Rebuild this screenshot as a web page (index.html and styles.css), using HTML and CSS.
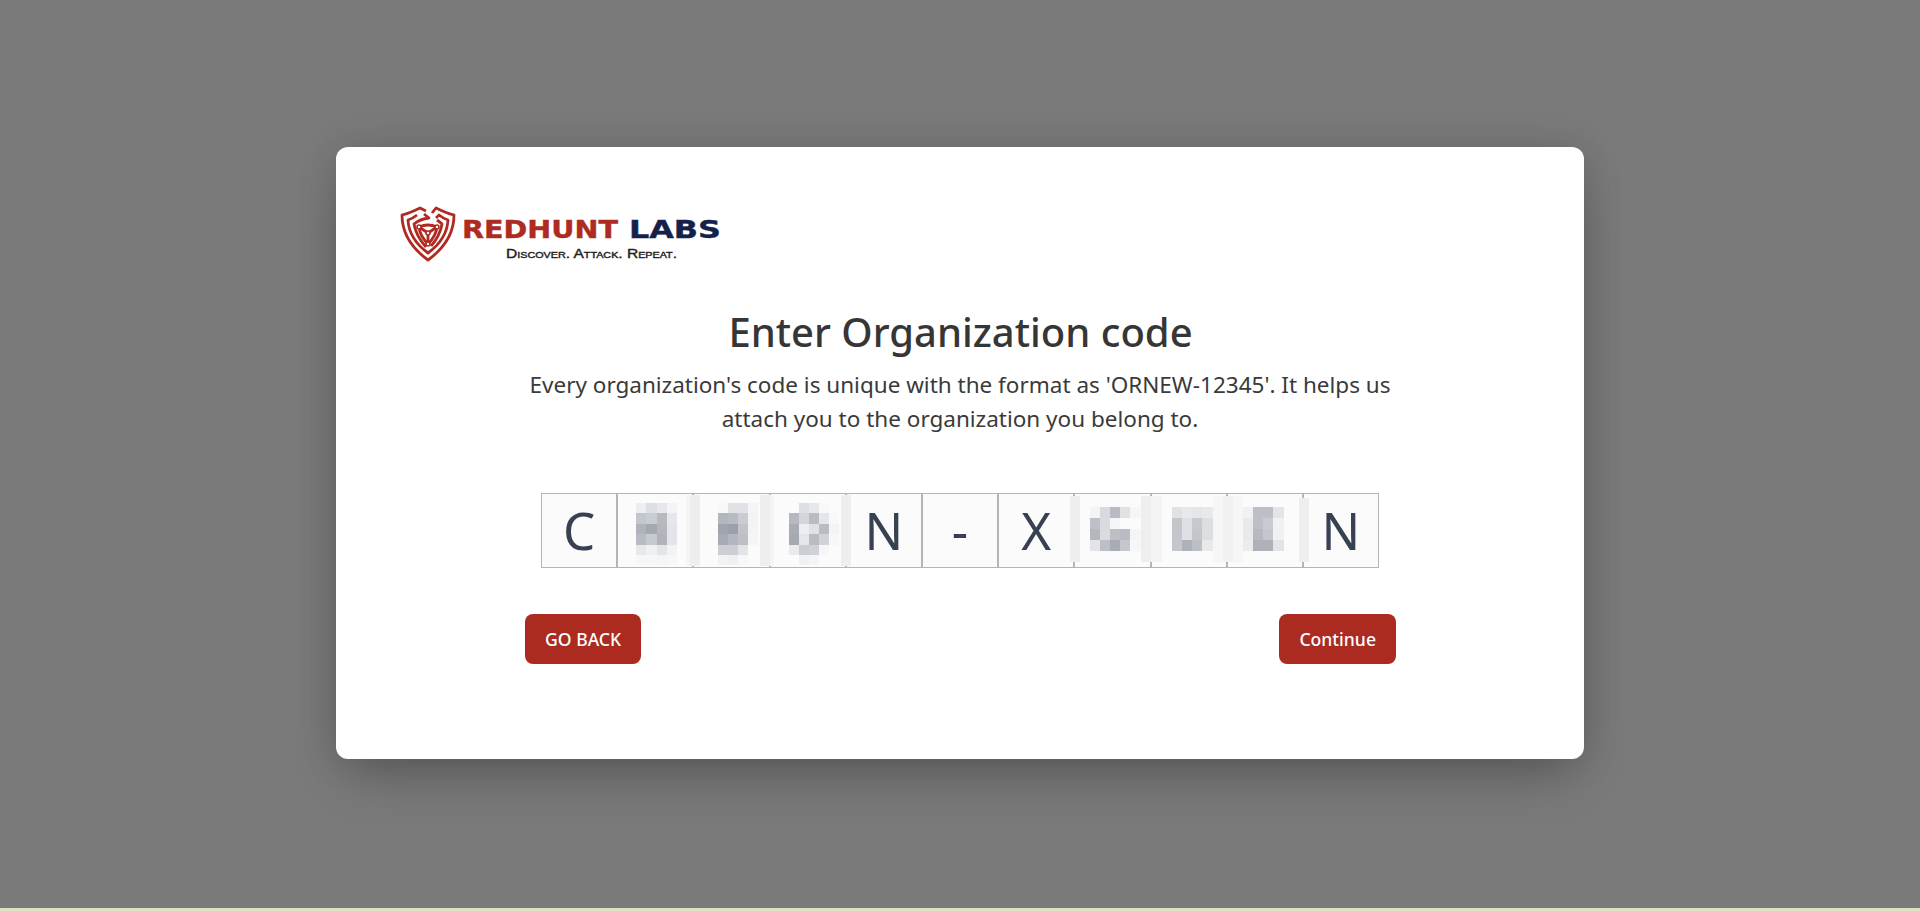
FILE: index.html
```html
<!DOCTYPE html>
<html lang="en">
<head>
    <meta charset="UTF-8">
    <meta name="viewport" content="width=device-width, initial-scale=1.0">
    <title>Enter Organization code - RedHunt Labs</title>
    <link rel="stylesheet" href="styles.css">
</head>
<body>
    <div class="overlay">
        <div class="card">
            <svg class="logo" width="322" height="60" viewBox="0 0 322 60" role="img" aria-label="RedHunt Labs">
                <g class="shield">
                    <path d="M26 6 L20 3 Q10 8 2 10 Q2 36 28 55 Q54 36 54 10 Q46 8 36 3 L32 8"/>
                    <path d="M17 10 Q12 14 8 15 Q9 34 28 48 Q47 34 48 15 Q44 14 39 10 L36 13"/>
                    <path d="M24 9 L29 13 Q20 14 14 19 Q16 31 26 42"/>
                    <path d="M37 15 Q40 17 42 19 Q40 31 31 41"/>
                    <path d="M19 22 Q28 18 37 22 Q36 31 28 39 Q20 31 19 22 Z"/>
                    <path d="M28 28 L28 39 M28 28 L19 22 M28 28 L37 22"/>
                    <circle cx="19" cy="22" r="2"/>
                    <circle cx="37" cy="22" r="2"/>
                    <circle cx="28" cy="39" r="2"/>
                    <circle cx="28" cy="28" r="2"/>
                </g>
                <text class="logo-red" x="62" y="33" textLength="156" lengthAdjust="spacingAndGlyphs">REDHUNT</text>
                <text class="logo-blue" x="229" y="33" textLength="92" lengthAdjust="spacingAndGlyphs">LABS</text>
                <text class="logo-tag" x="106" y="53" textLength="171" lengthAdjust="spacingAndGlyphs">Discover. Attack. Repeat.</text>
            </svg>

            <div class="content">
                <h1>Enter Organization code</h1>
                <p class="hint">Every organization's code is unique with the format as 'ORNEW-12345'. It helps us attach you to the organization you belong to.</p>

                <div class="code-row">
                    <div class="code-cell">C</div>
                    <div class="code-cell"></div>
                    <div class="code-cell"></div>
                    <div class="code-cell"></div>
                    <div class="code-cell">N</div>
                    <div class="code-cell">-</div>
                    <div class="code-cell">X</div>
                    <div class="code-cell"></div>
                    <div class="code-cell"></div>
                    <div class="code-cell"></div>
                    <div class="code-cell">N</div>

                    <!-- redaction layer, coordinates are the page ones -->
                    <svg class="redact" viewBox="541 493 838 75" shape-rendering="crispEdges" aria-hidden="true">
                        <rect x="686" y="495" width="4" height="71" fill="#f5f5f5"/>
                        <rect x="690" y="495" width="10" height="71" fill="#eeeeee"/>
                        <rect x="760" y="495" width="10" height="71" fill="#eeeeee"/>
                        <rect x="770" y="495" width="4" height="71" fill="#f5f5f5"/>
                        <rect x="841" y="495" width="10" height="71" fill="#eeeeee"/>
                        <rect x="1070" y="496" width="10" height="66" fill="#eeeeee"/>
                        <rect x="1141" y="496" width="10" height="66" fill="#eeeeee"/>
                        <rect x="1151" y="496" width="11" height="66" fill="#f4f4f4"/>
                        <rect x="1213" y="496" width="10" height="66" fill="#f6f6f6"/>
                        <rect x="1223" y="496" width="10" height="66" fill="#f0f0f0"/>
                        <rect x="1233" y="496" width="10" height="66" fill="#f6f6f6"/>
                        <rect x="1299" y="498" width="10" height="64" fill="#eeeeee"/>

                        <rect x="636" y="503" width="10" height="10" fill="#eceef0"/><rect x="646" y="503" width="11" height="10" fill="#dcdfe3"/><rect x="657" y="503" width="10" height="10" fill="#e6e8eb"/><rect x="667" y="503" width="10" height="10" fill="#f3f4f6"/>
                        <rect x="636" y="513" width="10" height="11" fill="#c3c6cc"/><rect x="646" y="513" width="11" height="11" fill="#c9ccd1"/><rect x="657" y="513" width="10" height="11" fill="#b6b9c0"/><rect x="667" y="513" width="10" height="11" fill="#e5e7ea"/>
                        <rect x="636" y="524" width="10" height="10" fill="#b0b3ba"/><rect x="646" y="524" width="11" height="10" fill="#a4a8b1"/><rect x="657" y="524" width="10" height="10" fill="#b3b6bc"/><rect x="667" y="524" width="10" height="10" fill="#e3e5e9"/>
                        <rect x="636" y="534" width="10" height="11" fill="#b8bbc2"/><rect x="646" y="534" width="11" height="11" fill="#c6c9ce"/><rect x="657" y="534" width="10" height="11" fill="#b0b3ba"/><rect x="667" y="534" width="10" height="11" fill="#e3e5e9"/>
                        <rect x="636" y="545" width="10" height="10" fill="#e6e8ea"/><rect x="646" y="545" width="11" height="10" fill="#eff0f2"/><rect x="657" y="545" width="10" height="10" fill="#e3e5e8"/><rect x="667" y="545" width="10" height="10" fill="#f2f3f5"/>
                        <rect x="636" y="555" width="10" height="10" fill="#f7f7f8"/><rect x="646" y="555" width="11" height="10" fill="#f6f7f8"/><rect x="657" y="555" width="10" height="10" fill="#f4f5f6"/><rect x="667" y="555" width="10" height="10" fill="#f7f7f8"/>

                        <rect x="718" y="503" width="10" height="10" fill="#f8f8f9"/><rect x="728" y="503" width="10" height="10" fill="#e0e2e5"/><rect x="738" y="503" width="10" height="10" fill="#e0e2e5"/><rect x="748" y="503" width="10" height="10" fill="#f4f5f6"/>
                        <rect x="718" y="513" width="10" height="11" fill="#b3b6bd"/><rect x="728" y="513" width="10" height="11" fill="#b8bbc1"/><rect x="738" y="513" width="10" height="11" fill="#c9ccd1"/><rect x="748" y="513" width="10" height="11" fill="#f3f4f6"/>
                        <rect x="718" y="524" width="10" height="10" fill="#a0a4ad"/><rect x="728" y="524" width="10" height="10" fill="#9ca0aa"/><rect x="738" y="524" width="10" height="10" fill="#c0c3c9"/><rect x="748" y="524" width="10" height="10" fill="#f3f4f6"/>
                        <rect x="718" y="534" width="10" height="11" fill="#a8abb3"/><rect x="728" y="534" width="10" height="11" fill="#b3b6bd"/><rect x="738" y="534" width="10" height="11" fill="#bcbfc6"/><rect x="748" y="534" width="10" height="11" fill="#f6f6f7"/>
                        <rect x="718" y="545" width="10" height="10" fill="#cbced3"/><rect x="728" y="545" width="10" height="10" fill="#cbced3"/><rect x="738" y="545" width="10" height="10" fill="#e2e4e7"/>
                        <rect x="718" y="555" width="10" height="10" fill="#f2f3f5"/><rect x="728" y="555" width="10" height="10" fill="#eff0f2"/><rect x="738" y="555" width="10" height="10" fill="#f6f7f8"/>

                        <rect x="799" y="503" width="10" height="10" fill="#dcdfe3"/><rect x="809" y="503" width="10" height="10" fill="#e6e8eb"/><rect x="819" y="503" width="10" height="10" fill="#f8f8f9"/>
                        <rect x="789" y="513" width="10" height="11" fill="#b6b9c0"/><rect x="799" y="513" width="10" height="11" fill="#d3d5da"/><rect x="809" y="513" width="10" height="11" fill="#b8bbc2"/><rect x="819" y="513" width="10" height="11" fill="#e4e6e9"/><rect x="829" y="513" width="10" height="11" fill="#f8f8f9"/>
                        <rect x="789" y="524" width="10" height="10" fill="#a9acb4"/><rect x="799" y="524" width="10" height="10" fill="#eceef0"/><rect x="809" y="524" width="10" height="10" fill="#dfe1e5"/><rect x="819" y="524" width="10" height="10" fill="#b9bcc3"/><rect x="829" y="524" width="10" height="10" fill="#f3f4f6"/>
                        <rect x="789" y="534" width="10" height="11" fill="#a6a9b2"/><rect x="799" y="534" width="10" height="11" fill="#e4e6e9"/><rect x="809" y="534" width="10" height="11" fill="#b8bbc1"/><rect x="819" y="534" width="10" height="11" fill="#d0d2d7"/><rect x="829" y="534" width="10" height="11" fill="#f7f7f8"/>
                        <rect x="789" y="545" width="10" height="10" fill="#e9ebed"/><rect x="799" y="545" width="10" height="10" fill="#cacdd2"/><rect x="809" y="545" width="10" height="10" fill="#cfd1d6"/><rect x="819" y="545" width="10" height="10" fill="#f6f6f7"/>
                        <rect x="799" y="555" width="10" height="10" fill="#f0f1f3"/><rect x="809" y="555" width="10" height="10" fill="#f4f5f6"/>

                        <rect x="1090" y="507" width="10" height="11" fill="#f4f4f6"/><rect x="1100" y="507" width="10" height="11" fill="#d8dade"/><rect x="1110" y="507" width="10" height="11" fill="#b8bbc2"/><rect x="1120" y="507" width="10" height="11" fill="#e0e2e5"/><rect x="1130" y="507" width="11" height="11" fill="#f6f6f7"/>
                        <rect x="1090" y="518" width="10" height="11" fill="#bdc0c7"/><rect x="1100" y="518" width="10" height="11" fill="#d9dbdf"/><rect x="1110" y="518" width="10" height="11" fill="#f5f6f7"/>
                        <rect x="1090" y="529" width="10" height="11" fill="#b4b7be"/><rect x="1100" y="529" width="10" height="11" fill="#d9dbdf"/><rect x="1110" y="529" width="10" height="11" fill="#bcbfc6"/><rect x="1120" y="529" width="10" height="11" fill="#b9bcc3"/><rect x="1130" y="529" width="11" height="11" fill="#f4f5f6"/>
                        <rect x="1090" y="540" width="10" height="11" fill="#e2e4e7"/><rect x="1100" y="540" width="10" height="11" fill="#bcbfc6"/><rect x="1110" y="540" width="10" height="11" fill="#a9acb4"/><rect x="1120" y="540" width="10" height="11" fill="#c4c7cc"/><rect x="1130" y="540" width="11" height="11" fill="#f5f6f7"/>

                        <rect x="1172" y="507" width="10" height="11" fill="#e0e2e5"/><rect x="1182" y="507" width="10" height="11" fill="#e8e9ec"/><rect x="1192" y="507" width="10" height="11" fill="#e4e6e9"/><rect x="1202" y="507" width="11" height="11" fill="#e8e9ec"/>
                        <rect x="1172" y="518" width="10" height="11" fill="#c3c6cb"/><rect x="1182" y="518" width="10" height="11" fill="#dee0e4"/><rect x="1192" y="518" width="10" height="11" fill="#c6c9ce"/><rect x="1202" y="518" width="11" height="11" fill="#dcdee2"/>
                        <rect x="1172" y="529" width="10" height="11" fill="#c3c6cb"/><rect x="1182" y="529" width="10" height="11" fill="#dee0e4"/><rect x="1192" y="529" width="10" height="11" fill="#c3c6cb"/><rect x="1202" y="529" width="11" height="11" fill="#dcdee2"/>
                        <rect x="1172" y="540" width="10" height="11" fill="#c3c6cb"/><rect x="1182" y="540" width="10" height="11" fill="#aeb1b9"/><rect x="1192" y="540" width="10" height="11" fill="#bcbfc6"/><rect x="1202" y="540" width="11" height="11" fill="#e7e9eb"/>

                        <rect x="1243" y="507" width="10" height="11" fill="#f0f1f3"/><rect x="1253" y="507" width="10" height="11" fill="#bcbfc6"/><rect x="1263" y="507" width="10" height="11" fill="#bcbfc6"/><rect x="1273" y="507" width="11" height="11" fill="#e2e4e7"/>
                        <rect x="1243" y="518" width="10" height="11" fill="#e8e9ec"/><rect x="1253" y="518" width="10" height="11" fill="#bdc0c6"/><rect x="1263" y="518" width="10" height="11" fill="#c8cbd0"/><rect x="1273" y="518" width="11" height="11" fill="#f0f1f3"/>
                        <rect x="1243" y="529" width="10" height="11" fill="#e8e9ec"/><rect x="1253" y="529" width="10" height="11" fill="#b6b9c0"/><rect x="1263" y="529" width="10" height="11" fill="#c3c6cb"/><rect x="1273" y="529" width="11" height="11" fill="#f0f1f3"/>
                        <rect x="1243" y="540" width="10" height="11" fill="#ebecee"/><rect x="1253" y="540" width="10" height="11" fill="#aeb1b9"/><rect x="1263" y="540" width="10" height="11" fill="#aeb1b9"/><rect x="1273" y="540" width="11" height="11" fill="#e2e4e7"/>
                    </svg>
                </div>

                <div class="actions">
                    <button class="btn">GO BACK</button>
                    <button class="btn">Continue</button>
                </div>
            </div>
        </div>
    </div>
    <div class="page-strip"></div>
</body>
</html>
```

FILE: styles.css
```css
html,
body {
    height: 100%;
}

body {
    margin: 0;
    display: flex;
    flex-direction: column;
    font-family: "Noto Sans", sans-serif;
    color: #333;
    background-color: #7a7a7a;
    overflow: hidden;
}

.overlay {
    flex: 1;
    display: flex;
    align-items: center;
    justify-content: center;
    background-color: #7a7a7a;
}

.page-strip {
    height: 3px;
    background-color: #dde2c2;
}

.card {
    width: 1248px;
    height: 612px;
    margin-bottom: 2px;
    box-sizing: border-box;
    padding: 58px 64px 0;
    background-color: #fff;
    border-radius: 12px;
    box-shadow: 0 25px 50px -12px rgba(0, 0, 0, 0.25), 0 0 40px rgba(0, 0, 0, 0.12);
}

.logo {
    display: block;
}

.shield path {
    fill: none;
    stroke: #b02a22;
    stroke-width: 2.8;
    stroke-linejoin: round;
}

.shield circle {
    fill: #fff;
    stroke: #b02a22;
    stroke-width: 1.6;
}

.logo-red,
.logo-blue {
    font-family: "DejaVu Sans", sans-serif;
    font-size: 24.5px;
    font-weight: 700;
    stroke-width: 0.4;
}

.logo-red {
    fill: #ae2b22;
    stroke: #ae2b22;
}

.logo-blue {
    fill: #14214a;
    stroke: #14214a;
}

.logo-tag {
    font-family: "Liberation Sans", sans-serif;
    font-size: 13px;
    font-variant: small-caps;
    fill: #222;
    stroke: #222;
    stroke-width: 0.4;
}

.content {
    width: 871px;
    margin-left: 125px;
    text-align: center;
}

h1 {
    margin: 37px 0 0;
    font-size: 40px;
    font-weight: 500;
    line-height: 60px;
    color: #363636;
}

.hint {
    width: 900px;
    margin: 6px 0 0 -15px;
    font-size: 22.5px;
    line-height: 34px;
    color: #3a3a3a;
}

.code-row {
    position: relative;
    display: flex;
    width: 838px;
    margin: 57px 0 0 16px;
}

.code-cell {
    flex: 1;
    height: 75px;
    box-sizing: border-box;
    border: 1px solid #b5b5b5;
    background-color: #fbfbfb;
    color: #374151;
    font-size: 51px;
    line-height: 73px;
    text-align: center;
}

.redact {
    position: absolute;
    left: 0;
    top: 0;
    width: 838px;
    height: 75px;
}

.actions {
    display: flex;
    justify-content: space-between;
    margin-top: 46px;
}

.btn {
    height: 50px;
    padding: 0 20px;
    border: none;
    border-radius: 8px;
    background-color: #ac2b21;
    color: #fff;
    font-family: "Noto Sans", sans-serif;
    font-size: 17.6px;
    font-weight: 500;
    cursor: pointer;
}
```
